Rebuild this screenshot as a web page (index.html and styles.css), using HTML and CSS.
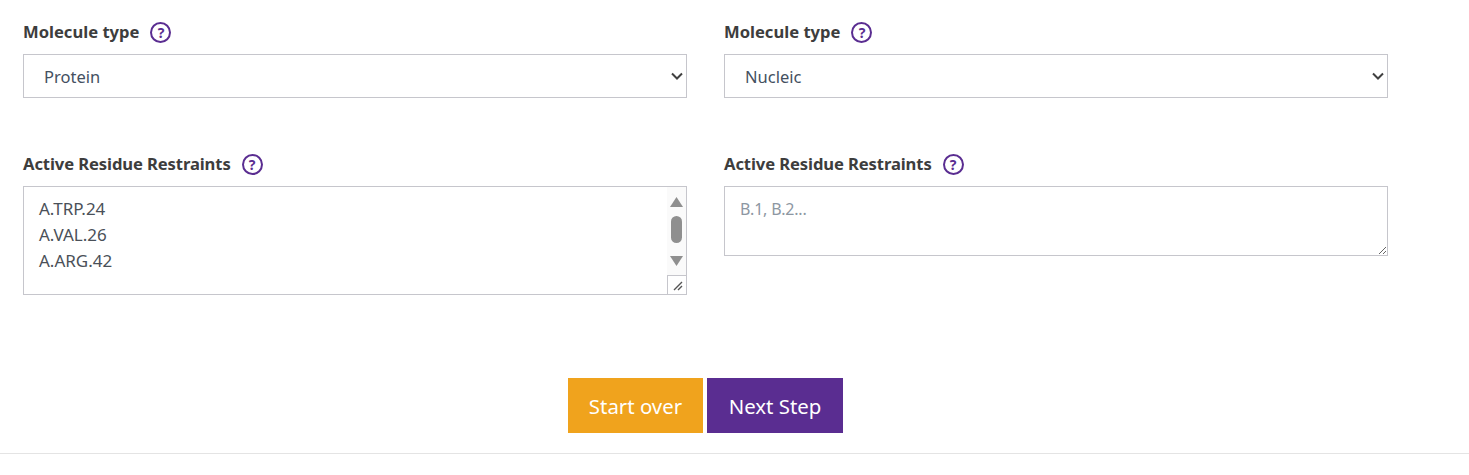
FILE: index.html
```html
<!DOCTYPE html>
<html lang="en">
<head>
    <meta charset="UTF-8">
    <meta name="viewport" content="width=device-width, initial-scale=1.0">
    <title>Molecule Setup</title>
    <link rel="stylesheet" href="styles.css">
</head>
<body>

    <form class="step-form">
        <div class="field-grid">
            <div class="field">
                <label class="field-label" for="type1">Molecule type <span class="help-icon">?</span></label>
                <select id="type1" class="field-select">
                    <option>Protein</option>
                    <option>Nucleic</option>
                </select>
            </div>
            <div class="field">
                <label class="field-label" for="type2">Molecule type <span class="help-icon">?</span></label>
                <select id="type2" class="field-select">
                    <option>Nucleic</option>
                    <option>Protein</option>
                </select>
            </div>
            <div class="field">
                <label class="field-label field-label-long" for="active1">Active Residue Restraints <span class="help-icon">?</span></label>
                <div class="text-wrap">
                    <textarea id="active1" class="field-text field-text-tall">A.TRP.24
A.VAL.26
A.ARG.42
</textarea>
                    <!-- scrollbar and resize corner of the tall box -->
                    <div class="scroll-rail">
                        <svg class="scroll-arrow" width="19" height="29" viewBox="0 0 19 29"><path d="M3 20h13l-6.500-10z"/></svg>
                        <div class="scroll-thumb"></div>
                        <svg class="scroll-arrow" width="19" height="29" viewBox="0 0 19 29"><path d="M3 10h13l-6.500 10z"/></svg>
                    </div>
                    <div class="resize-corner">
                        <svg width="19" height="19" viewBox="0 0 19 19"><path d="M7 15l8-8M11 15l4-4"/></svg>
                    </div>
                </div>
            </div>
            <div class="field">
                <label class="field-label field-label-long" for="active2">Active Residue Restraints <span class="help-icon">?</span></label>
                <textarea id="active2" class="field-text" placeholder="B.1, B.2..."></textarea>
            </div>
        </div>

        <div class="actions">
            <button type="button" class="btn btn-restart">Start over</button>
            <button type="button" class="btn btn-next">Next Step</button>
        </div>
    </form>

</body>
</html>
```

FILE: styles.css
```css
body {
    margin: 0;
    background-color: #fff;
    font-family: "Noto Sans", "Open Sans", sans-serif;
    color: #3d3d3d;
}

.step-form {
    padding: 20px 81px 20px 23px;
    border-bottom: 1px solid #e4e4e4;
}

.field-grid {
    display: grid;
    grid-template-columns: 664px 664px;
    column-gap: 37px;
    row-gap: 54px;
    align-items: start;
}

.field-label {
    display: flex;
    align-items: center;
    height: 22px;
    margin-bottom: 12px;
    font-size: 16.6px;
    font-weight: 700;
}

.field-label-long {
    letter-spacing: -0.1px;
}

.help-icon {
    display: inline-block;
    box-sizing: border-box;
    width: 21px;
    height: 21px;
    margin: 2px 0 0 11px;
    border: 2px solid #5a2d91;
    border-radius: 50%;
    color: #5a2d91;
    font-size: 14px;
    font-weight: 700;
    line-height: 17px;
    letter-spacing: 0;
    text-align: center;
}

.field-select {
    display: block;
    width: 100%;
    height: 44px;
    box-sizing: border-box;
    padding: 0 20px;
    border: 1px solid #c6c6cc;
    border-radius: 0;
    appearance: none;
    background-color: #fff;
    background-image: url("data:image/svg+xml,%3Csvg xmlns='http://www.w3.org/2000/svg' width='12' height='8'%3E%3Cpath d='M1 1.500l5 5 5-5' stroke='%23404040' stroke-width='2' fill='none'/%3E%3C/svg%3E");
    background-repeat: no-repeat;
    background-position: right 3px center;
    color: #44505f;
    font-family: inherit;
    font-size: 16.5px;
}

.text-wrap {
    position: relative;
}

.field-text {
    display: block;
    width: 100%;
    height: 70px;
    box-sizing: border-box;
    padding: 9px 15px;
    border: 1px solid #c6c6cc;
    border-radius: 0;
    outline: none;
    color: #4a5058;
    font-family: inherit;
    font-size: 17px;
    line-height: 26px;
}

.field-text::placeholder {
    color: #8d97a2;
    font-size: 16px;
    letter-spacing: -0.2px;
}

.field-text-tall {
    height: 109px;
}

.scroll-rail {
    position: absolute;
    top: 1px;
    right: 1px;
    display: flex;
    flex-direction: column;
    align-items: center;
    width: 19px;
    height: 88px;
    background-color: #fafafa;
}

.scroll-arrow {
    flex: none;
    fill: #8f8f8f;
}

.scroll-thumb {
    flex: none;
    width: 11px;
    height: 27px;
    margin-bottom: 3px;
    border-radius: 6px;
    background-color: #8f8f8f;
}

.resize-corner {
    position: absolute;
    right: 1px;
    bottom: 1px;
    width: 19px;
    height: 19px;
    box-sizing: border-box;
    border-top: 1px solid #c6c6cc;
    border-left: 1px solid #c6c6cc;
    background-color: #fff;
}

.resize-corner svg {
    display: block;
    margin: -1px 0 0 -1px;
    fill: none;
    stroke: #555;
    stroke-width: 1.4;
}

.actions {
    display: flex;
    justify-content: center;
    gap: 4px;
    margin-top: 83px;
}

.btn {
    height: 55px;
    padding: 0;
    border: none;
    color: #fff;
    font-family: inherit;
    font-size: 20.4px;
    cursor: pointer;
}

.btn-restart {
    width: 135px;
    background-color: #f0a31d;
}

.btn-next {
    width: 136px;
    background-color: #5a2d91;
}
```
